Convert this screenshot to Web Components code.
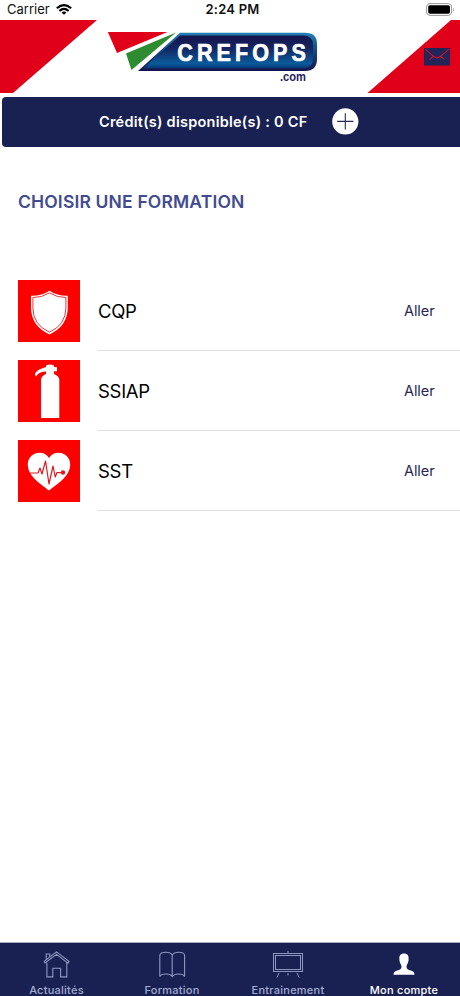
<!DOCTYPE html>
<html lang="fr">
<head>
<meta charset="utf-8">
<title>Crefops</title>
<style>
html,body{margin:0;height:100%;background:#fff}
body{font-family:Inter,"Liberation Sans",sans-serif;overflow:hidden}
</style>
</head>
<body>
<crefops-app></crefops-app>
<script>
const define = (name, html) => {
  const t = document.createElement('template');
  t.innerHTML = html;
  customElements.define(name, class extends HTMLElement {
    constructor() {
      super();
      this.attachShadow({mode: 'open'}).appendChild(t.content.cloneNode(true));
    }
  });
};

define('status-bar', `
<style>
:host{display:grid;grid-template-columns:1fr auto 1fr;align-items:center;height:20px;box-sizing:border-box;padding:0 5px 2px 7px;font-size:13px;color:#111;line-height:18px}
.l{display:flex;align-items:center;gap:6px}
.t{font-weight:600;letter-spacing:.2px;padding-left:3px}
.r{display:flex;justify-content:flex-end}
svg{display:block}
</style>
<div class="l"><span>Carrier</span><svg width="16" height="11" viewBox="0 0 15 11" preserveAspectRatio="none" fill="none" stroke="#000" stroke-width="2.1"><path d="M.8 4.2Q7.5-1.9 14.2 4.2"/><path d="M3.2 6.9Q7.5 2.8 11.8 6.9"/><path d="M7.5 10.8 5.2 8.5Q7.5 6.5 9.8 8.5Z" fill="#000" stroke="none"/></svg></div>
<span class="t">2:24 PM</span>
<div class="r"><svg width="29" height="13" viewBox="0 0 29 13"><rect x=".6" y=".6" width="25" height="11.8" rx="3.4" fill="#fff" stroke="#999"/><rect x="2.2" y="2.2" width="21.8" height="8.6" rx="1.8" fill="#000"/><path d="M27 4.5Q28.6 6.5 27 8.5Z" fill="#999"/></svg></div>`);

define('crefops-logo', `
<style>:host{display:block}svg{display:block}text{font-family:"Liberation Sans",Arial,sans-serif;font-weight:700}</style>
<svg width="214" height="56" viewBox="106 30 214 56">
<defs>
<linearGradient id="g" x1="0" y1="0" x2="0" y2="1"><stop offset="0" stop-color="#15134b"/><stop offset=".4" stop-color="#132762"/><stop offset=".85" stop-color="#0a5b9c"/><stop offset="1" stop-color="#0a3472"/></linearGradient>
<linearGradient id="e" x1="0" y1="0" x2="0" y2="1"><stop offset="0" stop-color="#2180b5"/><stop offset=".45" stop-color="#174b83"/><stop offset="1" stop-color="#17134c"/></linearGradient>
</defs>
<path d="M107.8 32H167.5L117 53Z" fill="#e1001a"/>
<path d="M126 53.5 176 32.6 131.5 70Z" fill="#2e8b30"/>
<path d="M180 32.7H305Q317 32.7 317 44V59Q317 71 305 71H138Z" fill="url(#e)"/>
<path d="M180 35.5H303Q313 35.5 313 45V58Q313 68.5 303 68.5H143Z" fill="url(#g)"/>
<text transform="translate(177.3 60.6) scale(.88 1)" font-size="24.5" fill="#fff" stroke="#fff" stroke-width=".7" textLength="146" lengthAdjust="spacing">CREFOPS</text>
<text x="280" y="80.8" font-size="12" fill="#252259" textLength="26" lengthAdjust="spacingAndGlyphs">.com</text>
</svg>`);

define('app-header', `
<style>
:host{display:grid;grid-template-columns:106px 214px 1fr;height:73px}
.logo{padding-top:10px}
.left{background:#e1001a;clip-path:polygon(0 0,97px 0,13px 73px,0 73px)}
.right{background:#e1001a;clip-path:polygon(131px 0,140px 0,140px 73px,47.5px 73px);display:flex;justify-content:flex-end;padding:28px 10px 0 0}
svg{display:block}
</style>
<div class="left"></div>
<crefops-logo class="logo"></crefops-logo>
<div class="right"><svg width="26" height="18" viewBox="0 0 26 18"><rect width="26" height="17.5" rx=".5" fill="#222557"/><path d="M1.2 1.2Q10 9.5 13 10.1 16 9.5 24.8 1.2M9.8 8 5.5 11.7M16.2 8 20.5 11.7" fill="none" stroke="#d2102c" stroke-width="1.1"/></svg></div>`);

define('credit-bar', `
<style>
:host{display:flex;align-items:center;height:50px;margin:4px -4px 0 2px;padding-left:97px;box-sizing:border-box;background:#192152;border-radius:4px;color:#fff;font-size:14.5px;font-weight:600}
span{width:208px;white-space:nowrap;letter-spacing:.25px;margin-top:-1px}
svg{margin-left:25px;margin-top:-1px;display:block}
</style>
<span><slot></slot></span>
<svg width="27" height="27" viewBox="0 0 27 27"><circle cx="13.3" cy="13.4" r="13.1" fill="#fff"/><path d="M5.2 13.4H21.4M13.3 5.3V21.5" stroke="#292957" stroke-width="1.1"/></svg>`);

define('section-title', `
<style>:host{display:block;margin:43px 0 0 18px;height:81px;line-height:24px;font-size:17.5px;letter-spacing:.16px;font-weight:600;color:#414b91;white-space:nowrap}</style><slot></slot>`);

define('training-row', `
<style>
:host{display:grid;grid-template-columns:62px 1fr;column-gap:17px;height:80px;padding-left:18px;align-items:center}
.tile{width:62px;height:62px;background:#fd0000}
.body{height:80px;box-sizing:border-box;border-bottom:1px solid #e2e2e4;display:flex;align-items:center;justify-content:space-between;padding:0 25.5px 0 1px}
.name{font-size:18.5px;color:#000;letter-spacing:-.3px}
.go{font-size:14.5px;color:#282856;letter-spacing:-.1px}
::slotted(svg){display:block}
</style>
<div class="tile"><slot name="icon"></slot></div>
<div class="body"><span class="name"><slot></slot></span><span class="go">Aller</span></div>`);

define('tab-item', `
<style>
:host{display:flex;flex-direction:column;align-items:center;color:#a5acd2;font-size:11px;letter-spacing:.25px;font-weight:500;line-height:14px;white-space:nowrap;padding-top:5px}
:host([active]){color:#fff}
::slotted(svg){display:block;height:32px;width:40px;margin-bottom:3px}
</style>
<slot name="icon"></slot><span><slot></slot></span>`);

define('tab-bar', `
<style>:host{display:grid;grid-template-columns:113px 118px 114px 118px;height:54px;box-sizing:border-box;background:#192152;border-top:1px solid #a9adbf;overflow:hidden}</style><slot></slot>`);

define('crefops-app', `
<style>
:host{display:flex;flex-direction:column;width:460px;height:996px;overflow:hidden;background:#fff}
main{flex:1}
</style>
<status-bar></status-bar>
<app-header></app-header>
<credit-bar>Crédit(s) disponible(s) : 0 CF</credit-bar>
<main>
<section-title>CHOISIR UNE FORMATION</section-title>
<training-row>CQP
<svg slot="icon" width="62" height="62" viewBox="0 0 62 62"><path d="M31.5 10.7Q39.5 16 49.8 15.7V28Q49.5 46 31.5 54.4 13.2 46 13 28V15.7Q23.5 16 31.5 10.7Z" fill="#fff"/><path d="M31.5 12.9Q39.5 17.8 47.9 17.5V28Q47.7 44.8 31.5 52.2 15 44.8 14.9 28V17.5Q23.5 17.8 31.5 12.9Z" fill="none" stroke="#ed1c24" stroke-width=".9"/></svg>
</training-row>
<training-row>SSIAP
<svg slot="icon" width="62" height="62" viewBox="0 0 62 62"><path d="M28 5.5Q32 3.5 36 5.5V7L39 7.2V11.2H36V14Q41.3 16 41.3 20V58H23V20Q23 16 28 14V11.5Q21 11.5 18 16.5L16.8 14Q18.5 9.5 28 7Z" fill="#fff"/></svg>
</training-row>
<training-row>SST
<svg slot="icon" width="62" height="62" viewBox="0 0 62 62"><path d="M31 50.5C22 43.5 9.8 36 9.8 24.5 9.8 12 26 9 31 18 36 9 52.2 12 52.2 24.5 52.2 36 40 43.5 31 50.5Z" fill="#fff"/><path d="M12 33H20L22 28 24 34 27.5 21 31 44 35 26 37.2 37 39 32.6H45" fill="none" stroke="#dd1b22" stroke-width="1.2" stroke-linejoin="round"/><circle cx="45" cy="32.5" r="2.2" fill="#dd1b22"/></svg>
</training-row>
</main>
<tab-bar>
<tab-item><svg slot="icon" viewBox="0 0 40 32" fill="none" stroke="#8f98c3" stroke-width="1.1"><path d="M9.9 14.8V28.9H15.8V20.2H23.6V28.9H29.8V14.8M8.1 15 7.2 13.4 19.5 3.9 32 13.4 31 15.1 19.5 6.4Z"/><path d="M9.2 11.8V6H12.8V9"/></svg>Actualités</tab-item>
<tab-item><svg slot="icon" viewBox="0 0 40 32" fill="none" stroke="#8f98c3" stroke-width="1.1"><path d="M20.2 7Q18.5 4.3 14 4.3 7.8 4.3 7.8 7.7V28.6Q9 26 14 26 18.5 26 20.2 28.6 22 26 26.5 26 31.5 26 32.6 28.6V7.7Q32.6 4.3 26.5 4.3 22 4.3 20.2 7V28.6"/></svg>Formation</tab-item>
<tab-item><svg slot="icon" viewBox="0 0 40 32" fill="none" stroke="#8f98c3"><rect x="5.5" y="5.5" width="29" height="18"/><rect x="7.5" y="7.5" width="25" height="14"/><path d="M20 2.8V4.8M11 25 9 29.6M20 25V27.5M29 25 31.2 29.6"/></svg>Entrainement</tab-item>
<tab-item active><svg slot="icon" viewBox="0 0 40 32"><path transform="translate(0 1)" d="M20 4.5C23.5 4.5 24.9 6.8 24.6 10 24.5 14 23.1 15.3 22.6 16.7 22.2 19 22.8 20.2 25.8 21.2 29 22.2 30.3 22.6 30.5 25.8H9.5C9.7 22.6 11 22.2 14.2 21.2 17.2 20.2 17.8 19 17.4 16.7 16.9 15.3 15.5 14 15.4 10 15.1 6.8 16.5 4.5 20 4.5Z" fill="#fff"/></svg>Mon compte</tab-item>
</tab-bar>`);
</script>
</body>
</html>
